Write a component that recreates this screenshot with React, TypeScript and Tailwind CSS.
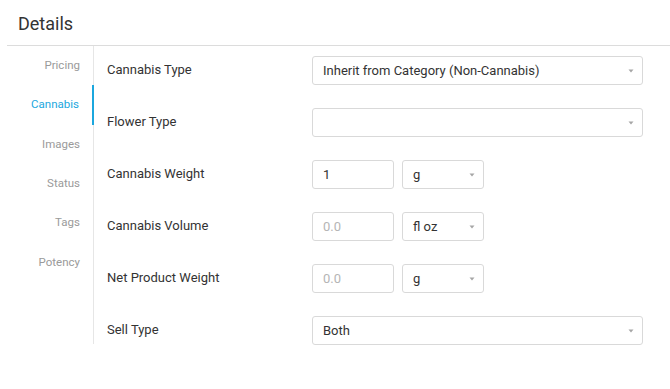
import React from "react";

function Caret() {
  return (
    <svg width="6" height="4" viewBox="0 0 6 4" className="shrink-0">
      <path d="M0.5 0.5 L5.5 0.5 L3 3.5 Z" fill="#a6a6a6" />
    </svg>
  );
}

function Select({ value, wide }: { value: string; wide?: boolean }) {
  return (
    <div
      className={`${wide ? "w-[331px]" : "w-[82px]"} h-[29px] border border-[#d9d9d9] rounded-[3px] bg-white flex items-center justify-between pl-[10px] pr-[8px] text-[13px] text-[#333]`}
    >
      <span>{value}</span>
      <Caret />
    </div>
  );
}

function NumInput({ value, placeholder }: { value?: string; placeholder?: string }) {
  return (
    <div className="w-[82px] h-[29px] border border-[#d9d9d9] rounded-[3px] bg-white flex items-center pl-[10px] text-[13px]">
      {value ? (
        <span className="text-[#333]">{value}</span>
      ) : (
        <span className="text-[#b5b5b5]">{placeholder}</span>
      )}
    </div>
  );
}

const navItems = ["Pricing", "Cannabis", "Images", "Status", "Tags", "Potency"];

export default function App() {
  const rows: { label: string; field: React.ReactNode }[] = [
    { label: "Cannabis Type", field: <Select value="Inherit from Category (Non-Cannabis)" wide /> },
    { label: "Flower Type", field: <Select value="" wide /> },
    {
      label: "Cannabis Weight",
      field: (
        <div className="flex gap-[8px]">
          <NumInput value="1" />
          <Select value="g" />
        </div>
      ),
    },
    {
      label: "Cannabis Volume",
      field: (
        <div className="flex gap-[8px]">
          <NumInput placeholder="0.0" />
          <Select value="fl oz" />
        </div>
      ),
    },
    {
      label: "Net Product Weight",
      field: (
        <div className="flex gap-[8px]">
          <NumInput placeholder="0.0" />
          <Select value="g" />
        </div>
      ),
    },
    { label: "Sell Type", field: <Select value="Both" wide /> },
  ];

  return (
    <div className="w-[670px] h-[389px] bg-white font-['Roboto',sans-serif] overflow-hidden">
      <div className="ml-[7px] border-b border-[#dcdcdc] h-[46px] pl-[11px] pt-[10px]">
        <div className="text-[18px] leading-[27px] text-[#333]">Details</div>
      </div>
      <div className="flex items-start">
        <div className="w-[94px] border-r border-[#e6e6e6] h-[298px] flex flex-col">
          {navItems.map((n) => (
            <div
              key={n}
              className={`h-[39.3px] flex items-center justify-end pr-[13px] text-[11.5px] ${
                n === "Cannabis" ? "text-[#1ba7de] border-r-2 border-[#1ba7de] -mr-[1px]" : "text-[#9a9a9a]"
              }`}
            >
              {n}
            </div>
          ))}
        </div>
        <div className="flex flex-col gap-[23px] pt-[10px] pl-[13px]">
          {rows.map((r) => (
            <div key={r.label} className="flex items-center h-[29px]">
              <div className="w-[205px] text-[13px] text-[#333] pb-[2px]">{r.label}</div>
              {r.field}
            </div>
          ))}
        </div>
      </div>
    </div>
  );
}
